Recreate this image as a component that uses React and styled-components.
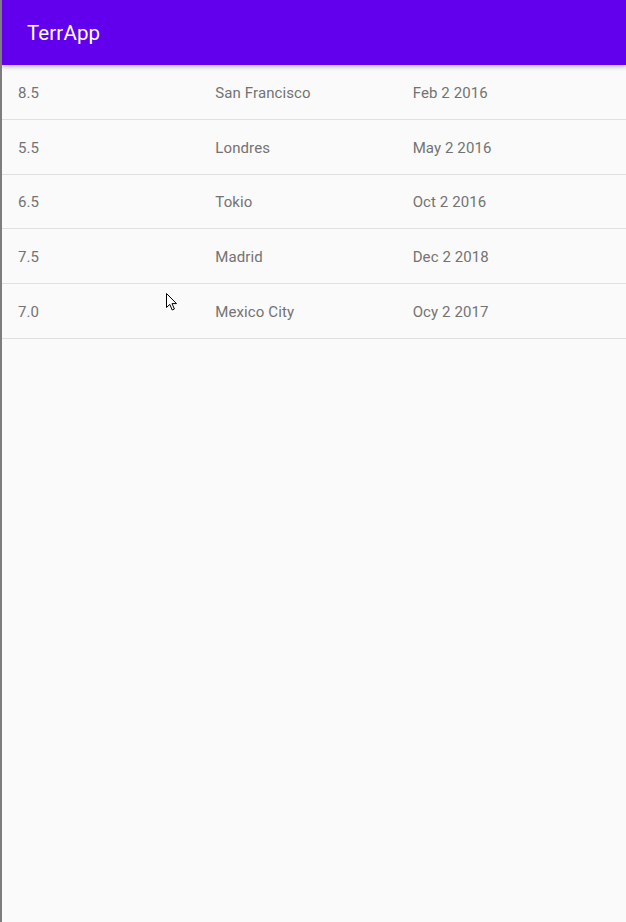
import React from "react";
import styled, { createGlobalStyle } from "styled-components";

const Global = createGlobalStyle`
  html, body {
    margin: 0;
    padding: 0;
    background: #fafafa;
  }
  body {
    font-family: Roboto, "Noto Sans", sans-serif;
  }
`;

const Screen = styled.div`
  position: relative;
  display: flex;
  flex-direction: column;
  width: 626px;
  height: 922px;
  box-sizing: border-box;
  border-left: 2px solid #7d7d7d;
  background: #fafafa;
  overflow: hidden;
`;

const AppBar = styled.header`
  display: flex;
  align-items: center;
  height: 65px;
  padding-left: 25px;
  background: #6200ee;
  box-shadow: 0 2px 4px rgba(0, 0, 0, 0.25);
  position: relative;
  z-index: 1;
`;

const Title = styled.h1`
  margin: 0;
  color: #ffffff;
  font-size: 20.5px;
  font-weight: 400;
  letter-spacing: 0.1px;
`;

const List = styled.div`
  display: flex;
  flex-direction: column;
`;

const Row = styled.div`
  display: grid;
  grid-template-columns: repeat(3, 1fr);
  align-items: center;
  box-sizing: border-box;
  height: 54.8px;
  padding: 2px 16px 0;
  border-bottom: 1px solid #e0e0e0;
`;

const Cell = styled.span`
  color: #737373;
  font-size: 15px;
  letter-spacing: 0.1px;
`;

const Cursor = styled.svg`
  position: absolute;
  left: 163px;
  top: 292px;
`;

const quakes = [
  { mag: "8.5", place: "San Francisco", date: "Feb 2 2016" },
  { mag: "5.5", place: "Londres", date: "May 2 2016" },
  { mag: "6.5", place: "Tokio", date: "Oct 2 2016" },
  { mag: "7.5", place: "Madrid", date: "Dec 2 2018" },
  { mag: "7.0", place: "Mexico City", date: "Ocy 2 2017" },
];

export default function App() {
  return (
    <>
      <Global />
      <Screen>
        <AppBar>
          <Title>TerrApp</Title>
        </AppBar>
        <List>
          {quakes.map((q) => (
            <Row key={q.place}>
              <Cell>{q.mag}</Cell>
              <Cell>{q.place}</Cell>
              <Cell>{q.date}</Cell>
            </Row>
          ))}
        </List>
        <Cursor width="14" height="20" viewBox="0 0 14 20">
          <path
            d="M1.5 1.5 L1.5 15.5 L4.8 12.4 L7.2 18 L9.4 17 L7 11.6 L11.5 11.6 Z"
            fill="#ffffff"
            stroke="#000000"
            strokeWidth="1"
            strokeLinejoin="miter"
          />
        </Cursor>
      </Screen>
    </>
  );
}
